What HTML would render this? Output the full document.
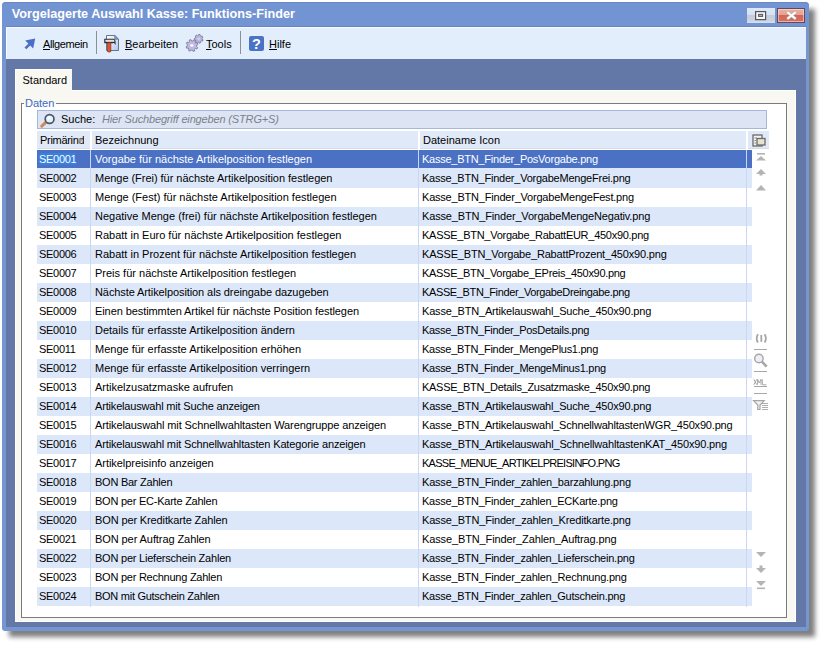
<!DOCTYPE html>
<html><head><meta charset="utf-8"><style>
*{box-sizing:border-box;margin:0;padding:0}
html,body{width:823px;height:645px;overflow:hidden;background:#fff;font-family:"Liberation Sans",sans-serif;font-size:11px;color:#000}
.abs{position:absolute}
#shadow{position:absolute;left:9px;top:9px;width:806px;height:628px;background:rgba(0,0,0,0.5);filter:blur(2.5px)}
#frame{position:absolute;left:2px;top:2px;width:807px;height:629px;background:#7696d2;border-radius:4px 4px 3px 3px}
#titlebar{position:absolute;left:2px;top:2px;width:807px;height:25px;background:#7394d2;border-top:1px solid #6a88c2;border-radius:4px 4px 0 0}
#tbline{position:absolute;left:6px;top:26px;width:800px;height:1px;background:#6a83ba}
#title{position:absolute;left:11.8px;top:6.6px;color:#fff;font-weight:bold;font-size:12.65px;line-height:15px;white-space:nowrap}
#btnR{position:absolute;left:747px;top:8px;width:28px;height:15px;background:linear-gradient(#dde9fb 0,#d4e1f4 45%,#c5cdd9 50%,#c8d1dd 80%,#d5e1f2 100%)}
#btnC{position:absolute;left:777px;top:8px;width:28px;height:15px;border:1px solid #634a58;box-shadow:inset 0 0 0 1px rgba(255,230,225,.55);background:linear-gradient(#eab0a3 0,#e6a294 45%,#d26656 45%,#d4705f 100%)}
#tb{position:absolute;left:6px;top:27px;width:800px;height:32px;background:#e2eefc;border-top:1px solid #f6fbff;border-left:1px solid #f6fbff}
#dark{position:absolute;left:6px;top:59px;width:800px;height:568px;background:#6478a8}
#tab{position:absolute;left:15px;top:69px;width:57px;height:22px;background:#f8f7f1;border-top:1px solid #fff;border-left:1px solid #fff}
#tab span{position:absolute;left:6.5px;top:3px;line-height:14px}
#panel{position:absolute;left:15px;top:90px;width:781px;height:532px;background:#f8f7f1;border:1px solid #fff}
#grp{position:absolute;left:21px;top:103px;width:766px;height:515px;border:1px solid #7b7b7b;background:#fff}
#legend{position:absolute;left:25px;top:96px;color:#3b6cbf;font-size:11px;line-height:14px}
#lmask{position:absolute;left:24px;top:103px;width:32px;height:1px;background:#f8f7f1}
#search{position:absolute;left:37px;top:110px;width:730px;height:19px;border:1px solid #a5b8dc;background:#dde5f4}
#search .lbl{position:absolute;left:23px;top:1px;line-height:14px}
#search .ph{position:absolute;left:64px;top:1px;line-height:14px;color:#7b818c;font-style:italic;letter-spacing:-0.15px}
#hdr{position:absolute;left:37px;top:131px;width:732px;height:19px;background:#fff}
.h{position:absolute;top:0;height:18px;line-height:19px;padding-left:3px;white-space:nowrap;overflow:hidden;background:#e0e9f8;border-bottom:1px solid #d6dde8}
.r{position:absolute;left:37px;width:715px;height:19px;background:#fff}
.r.alt{background:#dce8fa}
.r.sel{background:#4a71c4;color:#fff;border-bottom:1px solid #dce8fa}
.r div{position:absolute;top:0;height:19px;line-height:18px;padding-left:3px;white-space:nowrap;overflow:hidden}
.c1{left:0;width:53px;padding-left:2px!important;letter-spacing:-0.3px}
.c2{left:54px;width:327px;padding-left:4px!important}
.c3{left:382px;width:327px}
.hl{background:#3b7edb;color:#f2ffff}
.vl{position:absolute;width:1px;background:#c9d8f0}
.tt{position:absolute;top:37px;line-height:14px;white-space:nowrap}
.tt.al{letter-spacing:-0.4px}
.tt u{text-decoration:underline}
.sep{position:absolute;top:31px;width:1px;height:23px;background:#8a9098}

</style></head><body>
<div id="shadow"></div>
<div id="frame"></div>
<div id="titlebar"></div><div id="tbline"></div>
<div id="title">Vorgelagerte Auswahl Kasse: Funktions-Finder</div>
<div id="btnR"><svg width="28" height="15" style="position:absolute;left:0;top:0"><rect x="8.6" y="3.6" width="10" height="8" fill="#f6f7fa" stroke="#555" stroke-width="1.2"/><rect x="11.6" y="6.4" width="4" height="2" fill="#bbb" stroke="#555" stroke-width="1"/></svg></div>
<div id="btnC"><svg width="26" height="13" style="position:absolute;left:0;top:0"><path d="M9.3 3.2 L17.7 9.8 M17.7 3.2 L9.3 9.8" stroke="#a89a98" stroke-width="3.2"/><path d="M9.3 3.2 L17.7 9.8 M17.7 3.2 L9.3 9.8" stroke="#fff" stroke-width="2.2"/></svg></div>
<div id="tb"></div>
<svg class="abs" style="left:24px;top:37px" width="13" height="13" viewBox="0 0 13 13"><path d="M1.2 3.6 L11.2 1.4 L9.2 11.4 Z" fill="#4a6ec9"/><path d="M1.4 11.4 L7 5.8" stroke="#4a6ec9" stroke-width="2.6"/></svg>
<span class="tt al" style="left:43px"><u>A</u>llgemein</span>
<div class="sep" style="left:96px"></div>
<svg class="abs" style="left:103px;top:34px" width="18" height="19" viewBox="0 0 18 19">
  <defs><linearGradient id="pg" x1="0" y1="0" x2="1" y2="1"><stop offset="0" stop-color="#ffffff"/><stop offset="1" stop-color="#b3c8ee"/></linearGradient>
  <linearGradient id="hd" x1="0" y1="0" x2="0" y2="1"><stop offset="0" stop-color="#ffffff"/><stop offset="1" stop-color="#9a9a9a"/></linearGradient></defs>
  <path d="M3.5 1.5 H11.8 L15.5 5.2 V16.5 H3.5 Z" fill="url(#pg)" stroke="#64758f" stroke-width="1"/>
  <path d="M11.8 1.5 V5.2 H15.5 Z" fill="#7fa3dc" stroke="#64758f" stroke-width="0.8"/>
  <path d="M1.8 5.3 H10.2 Q12 5.3 12 7.3 V9.3 Q11.2 8.2 10 8.6 H1.8 Z" fill="url(#hd)" stroke="#2a2a2a" stroke-width="1.1"/>
  <path d="M4.6 8.8 H7.8 V17.6 Q6.2 18.6 4.6 17.6 Z" fill="#e2582e" stroke="#8f3218" stroke-width="0.8"/>
</svg>
<span class="tt" style="left:125px"><u>B</u>earbeiten</span>
<svg class="abs" style="left:185px;top:33px" width="20" height="20" viewBox="0 0 20 20">
  <g fill="#bebadf" stroke="#7e7b9e" stroke-width="0.9"><path d="M17.0 6.1 L18.0 6.8 L17.5 8.1 L16.3 7.9 L15.5 8.6 L15.6 9.8 L14.2 10.2 L13.7 9.1 L12.6 8.9 L11.8 9.7 L10.6 8.9 L11.1 7.8 L10.6 6.9 L9.4 6.7 L9.3 5.4 L10.5 5.0 L10.9 4.1 L10.3 3.0 L11.3 2.1 L12.3 2.8 L13.3 2.5 L13.7 1.4 L15.1 1.6 L15.2 2.8 L16.0 3.4 L17.2 3.1 L17.8 4.3 L16.9 5.1 Z"/><path d="M11.5 13.4 L12.7 14.4 L12.0 15.9 L10.5 15.5 L9.5 16.3 L9.7 17.9 L8.1 18.4 L7.3 17.1 L6.1 17.0 L5.1 18.2 L3.6 17.5 L4.0 16.0 L3.2 15.0 L1.6 15.2 L1.1 13.6 L2.4 12.8 L2.5 11.6 L1.3 10.6 L2.0 9.1 L3.5 9.5 L4.5 8.7 L4.3 7.1 L5.9 6.6 L6.7 7.9 L7.9 8.0 L8.9 6.8 L10.4 7.5 L10.0 9.0 L10.8 10.0 L12.4 9.8 L12.9 11.4 L11.6 12.2 Z"/></g>
  <circle cx="13.7" cy="5.8" r="1.1" fill="#d8d6ee"/><ellipse cx="6.8" cy="12.4" rx="1.7" ry="1.2" fill="#fff"/>
</svg>
<span class="tt" style="left:206px"><u>T</u>ools</span>
<div class="sep" style="left:240px"></div>
<svg class="abs" style="left:249px;top:36px" width="15" height="15" viewBox="0 0 15 15"><rect x="0" y="0" width="15" height="15" rx="2" fill="#4a73c5"/><text x="7.5" y="12.6" text-anchor="middle" font-family="Liberation Sans" font-weight="bold" font-size="14.5" fill="#fff">?</text></svg>
<span class="tt" style="left:269px"><u>H</u>ilfe</span>
<div id="dark"></div>
<div id="panel"></div>
<div id="tab"><span>Standard</span></div>
<div id="grp"></div>
<div id="lmask"></div><div id="legend">Daten</div>
<div id="search">
  <svg class="abs" style="left:2px;top:2px" width="16" height="15" viewBox="0 0 16 15"><path d="M1.8 13.2 L6 9.2" stroke="#d08a55" stroke-width="3" stroke-linecap="round"/><circle cx="9.6" cy="6" r="4.4" fill="#dff2fb" stroke="#4d5668" stroke-width="1.7"/><circle cx="8.8" cy="5" r="1.8" fill="#fff" opacity=".9"/></svg>
  <span class="lbl">Suche:</span><span class="ph">Hier Suchbegriff eingeben (STRG+S)</span>
</div>
<div id="hdr">
  <div class="h" style="left:0;width:53px"><span style="display:block;width:44px;overflow:hidden;letter-spacing:-0.3px">Primärindex</span></div>
  <svg class="abs" style="left:41px;top:7px" width="5" height="7"><path d="M0 0.5 H4.5 L2.25 6.5 Z" fill="#a29e92"/></svg>
  <div class="h" style="left:55px;width:326px">Bezeichnung</div>
  <div class="h" style="left:383px;width:326px">Dateiname Icon</div>
  <div class="h" style="left:711px;width:21px"><svg class="abs" style="left:4px;top:3px" width="14" height="13" viewBox="0 0 14 13"><rect x="1" y="1" width="9" height="11" fill="#f4f4f4" stroke="#6a6a6a" stroke-width="1.3"/><rect x="5" y="4.5" width="8" height="6.5" fill="#e6e2cc" stroke="#6a6a6a" stroke-width="1.3"/><path d="M2.5 4 H5 M2.5 6.5 H4 M2.5 9 H4" stroke="#777" stroke-width="0.9"/></svg></div>
</div>
<div class="r sel" style="top:150px"><div class="c1"><span class="hl">SE0001</span></div><div class="c2">Vorgabe für nächste Artikelposition festlegen</div><div class="c3" style="letter-spacing:-0.247px">Kasse_BTN_Finder_PosVorgabe.png</div></div>
<div class="r alt" style="top:169px"><div class="c1">SE0002</div><div class="c2" style="letter-spacing:-0.033px">Menge (Frei) für nächste Artikelposition festlegen</div><div class="c3" style="letter-spacing:-0.233px">Kasse_BTN_Finder_VorgabeMengeFrei.png</div></div>
<div class="r" style="top:188px"><div class="c1">SE0003</div><div class="c2">Menge (Fest) für nächste Artikelposition festlegen</div><div class="c3" style="letter-spacing:-0.208px">Kasse_BTN_Finder_VorgabeMengeFest.png</div></div>
<div class="r alt" style="top:207px"><div class="c1">SE0004</div><div class="c2">Negative Menge (frei) für nächste Artikelposition festlegen</div><div class="c3" style="letter-spacing:-0.162px">Kasse_BTN_Finder_VorgabeMengeNegativ.png</div></div>
<div class="r" style="top:226px"><div class="c1">SE0005</div><div class="c2">Rabatt in Euro für nächste Artikelposition festlegen</div><div class="c3" style="letter-spacing:-0.273px">KASSE_BTN_Vorgabe_RabattEUR_450x90.png</div></div>
<div class="r alt" style="top:245px"><div class="c1">SE0006</div><div class="c2">Rabatt in Prozent für nächste Artikelposition festlegen</div><div class="c3" style="letter-spacing:-0.173px">KASSE_BTN_Vorgabe_RabattProzent_450x90.png</div></div>
<div class="r" style="top:264px"><div class="c1">SE0007</div><div class="c2">Preis für nächste Artikelposition festlegen</div><div class="c3" style="letter-spacing:-0.303px">KASSE_BTN_Vorgabe_EPreis_450x90.png</div></div>
<div class="r alt" style="top:283px"><div class="c1">SE0008</div><div class="c2" style="letter-spacing:-0.093px">Nächste Artikelposition als dreingabe dazugeben</div><div class="c3" style="letter-spacing:-0.369px">KASSE_BTN_Finder_VorgabeDreingabe.png</div></div>
<div class="r" style="top:302px"><div class="c1">SE0009</div><div class="c2" style="letter-spacing:-0.081px">Einen bestimmten Artikel für nächste Position festlegen</div><div class="c3" style="letter-spacing:-0.185px">Kasse_BTN_Artikelauswahl_Suche_450x90.png</div></div>
<div class="r alt" style="top:321px"><div class="c1">SE0010</div><div class="c2">Details für erfasste Artikelposition ändern</div><div class="c3" style="letter-spacing:-0.29px">Kasse_BTN_Finder_PosDetails.png</div></div>
<div class="r" style="top:340px"><div class="c1">SE0011</div><div class="c2">Menge für erfasste Artikelposition erhöhen</div><div class="c3" style="letter-spacing:-0.28px">Kasse_BTN_Finder_MengePlus1.png</div></div>
<div class="r alt" style="top:359px"><div class="c1">SE0012</div><div class="c2">Menge für erfasste Artikelposition verringern</div><div class="c3" style="letter-spacing:-0.274px">Kasse_BTN_Finder_MengeMinus1.png</div></div>
<div class="r" style="top:378px"><div class="c1">SE0013</div><div class="c2">Artikelzusatzmaske aufrufen</div><div class="c3" style="letter-spacing:-0.29px">KASSE_BTN_Details_Zusatzmaske_450x90.png</div></div>
<div class="r alt" style="top:397px"><div class="c1">SE0014</div><div class="c2" style="letter-spacing:-0.175px">Artikelauswahl mit Suche anzeigen</div><div class="c3" style="letter-spacing:-0.185px">Kasse_BTN_Artikelauswahl_Suche_450x90.png</div></div>
<div class="r" style="top:416px"><div class="c1">SE0015</div><div class="c2" style="letter-spacing:-0.113px">Artikelauswahl mit Schnellwahltasten Warengruppe anzeigen</div><div class="c3" style="letter-spacing:-0.189px">Kasse_BTN_Artikelauswahl_SchnellwahltastenWGR_450x90.png</div></div>
<div class="r alt" style="top:435px"><div class="c1">SE0016</div><div class="c2" style="letter-spacing:-0.141px">Artikelauswahl mit Schnellwahltasten Kategorie anzeigen</div><div class="c3" style="letter-spacing:-0.176px">Kasse_BTN_Artikelauswahl_SchnellwahltastenKAT_450x90.png</div></div>
<div class="r" style="top:454px"><div class="c1">SE0017</div><div class="c2" style="letter-spacing:-0.05px">Artikelpreisinfo anzeigen</div><div class="c3" style="letter-spacing:-0.719px">KASSE_MENUE_ARTIKELPREISINFO.PNG</div></div>
<div class="r alt" style="top:473px"><div class="c1">SE0018</div><div class="c2" style="letter-spacing:-0.246px">BON Bar Zahlen</div><div class="c3" style="letter-spacing:-0.2px">Kasse_BTN_Finder_zahlen_barzahlung.png</div></div>
<div class="r" style="top:492px"><div class="c1">SE0019</div><div class="c2" style="letter-spacing:-0.236px">BON per EC-Karte Zahlen</div><div class="c3" style="letter-spacing:-0.226px">Kasse_BTN_Finder_zahlen_ECKarte.png</div></div>
<div class="r alt" style="top:511px"><div class="c1">SE0020</div><div class="c2" style="letter-spacing:-0.124px">BON per Kreditkarte Zahlen</div><div class="c3" style="letter-spacing:-0.168px">Kasse_BTN_Finder_zahlen_Kreditkarte.png</div></div>
<div class="r" style="top:530px"><div class="c1">SE0021</div><div class="c2" style="letter-spacing:-0.081px">BON per Auftrag Zahlen</div><div class="c3" style="letter-spacing:-0.121px">Kasse_BTN_Finder_Zahlen_Auftrag.png</div></div>
<div class="r alt" style="top:549px"><div class="c1">SE0022</div><div class="c2" style="letter-spacing:-0.219px">BON per Lieferschein Zahlen</div><div class="c3" style="letter-spacing:-0.218px">Kasse_BTN_Finder_zahlen_Lieferschein.png</div></div>
<div class="r" style="top:568px"><div class="c1">SE0023</div><div class="c2" style="letter-spacing:-0.245px">BON per Rechnung Zahlen</div><div class="c3" style="letter-spacing:-0.211px">Kasse_BTN_Finder_zahlen_Rechnung.png</div></div>
<div class="r alt" style="top:587px"><div class="c1">SE0024</div><div class="c2" style="letter-spacing:-0.27px">BON mit Gutschein Zahlen</div><div class="c3" style="letter-spacing:-0.228px">Kasse_BTN_Finder_zahlen_Gutschein.png</div></div>
<div class="vl" style="left:90px;top:150px;height:457px"></div>
<div class="vl" style="left:418px;top:150px;height:457px"></div>
<div class="vl" style="left:746px;top:150px;height:457px"></div>
<svg class="abs" style="left:755px;top:152px" width="12" height="40" viewBox="0 0 12 40" fill="#b4b4b4">
  <rect x="2" y="1" width="8" height="1.6"/><path d="M1 8.5 L6 4 L11 8.5 Z"/>
  <path d="M1 22 L6 17 L11 22 Z"/><rect x="4.5" y="21" width="3" height="2.5"/>
  <path d="M1 38.5 L6 33 L11 38.5 Z"/>
</svg>
<svg class="abs" style="left:748px;top:328px" width="24" height="86" viewBox="0 0 24 86">
  <g fill="none" stroke="#a6a6a6">
    <path d="M10 6.3 Q7.4 10.4 10 14.5 M16.6 6.3 Q19.2 10.4 16.6 14.5" stroke-width="1.8"/>
    <path d="M13.3 7 V13.8" stroke-width="1.8"/>
    <path d="M6 21.5 H19 M6 43.5 H19 M6 65.5 H19" stroke="#a8a8a8" stroke-width="1"/>
    <circle cx="10.9" cy="30.5" r="4.2" fill="#efeefa" stroke-width="1.4"/>
    <path d="M13.9 33.6 L18.6 38.6" stroke-width="2.6"/>
    <path d="M6 58.5 H19" stroke-width="1"/>
    <path d="M5.6 72.7 H16.2 L12 77 V81.5 H9.8 V77 Z" stroke-width="1.2" fill="#f2f2f2"/>
    <path d="M14 75.5 H20 M14 77.5 H20 M14 79.5 H20 M14 81.5 H20" stroke-width="0.9"/>
  </g>
  <path d="M5.8 51.3 L8.8 56.8 M8.8 51.3 L5.8 56.8 M9.6 56.8 V51.3 L11.3 55 L13 51.3 V56.8 M14.3 51.3 V56.8 H18.4" fill="none" stroke="#a6a6a6" stroke-width="1"/>
</svg>
<svg class="abs" style="left:755px;top:550px" width="12" height="40" viewBox="0 0 12 40" fill="#b4b4b4">
  <path d="M1 2 L6 7 L11 2 Z"/>
  <path d="M1 18 L6 23 L11 18 Z"/><rect x="4.5" y="15.5" width="3" height="2.5"/>
  <path d="M1 31 L6 36 L11 31 Z"/><rect x="2" y="37.5" width="8" height="1.6"/>
</svg>

</body></html>
